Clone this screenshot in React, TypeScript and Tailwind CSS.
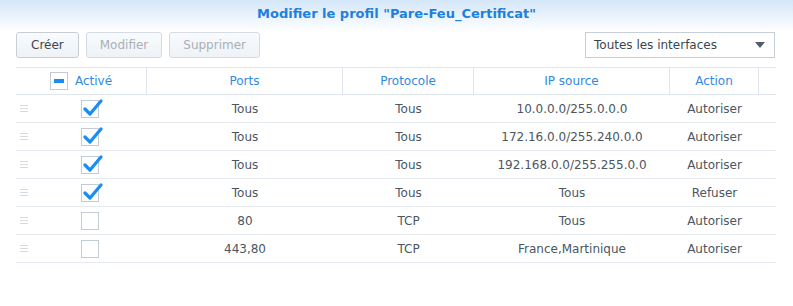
import React from "react";

const rows = [
  { on: true, ports: "Tous", proto: "Tous", ip: "10.0.0.0/255.0.0.0", action: "Autoriser" },
  { on: true, ports: "Tous", proto: "Tous", ip: "172.16.0.0/255.240.0.0", action: "Autoriser" },
  { on: true, ports: "Tous", proto: "Tous", ip: "192.168.0.0/255.255.0.0", action: "Autoriser" },
  { on: true, ports: "Tous", proto: "Tous", ip: "Tous", action: "Refuser" },
  { on: false, ports: "80", proto: "TCP", ip: "Tous", action: "Autoriser" },
  { on: false, ports: "443,80", proto: "TCP", ip: "France,Martinique", action: "Autoriser" },
];

function Check({ on }: { on: boolean }) {
  return (
    <div className="relative w-[18px] h-[18px] border border-[#c3ccd6] bg-white">
      {on && (
        <svg className="absolute left-[1px] top-[-2px]" width="20" height="18" viewBox="0 0 20 18">
          <path d="M2 10 L7 15 L18 2" fill="none" stroke="#1b8cf0" strokeWidth="3.2" strokeLinecap="round" strokeLinejoin="round" />
        </svg>
      )}
    </div>
  );
}

function Handle() {
  return (
    <div className="flex flex-col gap-[2px] w-[8px]">
      <div className="h-px bg-[#d5dbe1]" />
      <div className="h-px bg-[#d5dbe1]" />
      <div className="h-px bg-[#d5dbe1]" />
    </div>
  );
}

export default function App() {
  return (
    <div className="w-[793px] h-[306px] bg-white text-[12px] text-[#4b5661]" style={{ fontFamily: "'DejaVu Sans', Verdana, sans-serif" }}>
      <div className="h-[32px] bg-gradient-to-b from-[#d3e6f8] to-white flex justify-center pt-[5px]">
        <div className="text-[13px] font-bold text-[#1e80de] leading-[18px]">Modifier le profil "Pare-Feu_Certificat"</div>
      </div>
      <div className="flex items-center pl-[16px] pr-[18px] h-[26px] gap-[7px]">
        <button className="h-[26px] px-[14px] rounded-[3px] border border-[#c6cfd8] bg-gradient-to-b from-[#f9fbfd] to-[#eef2f6] text-[#3a4550] text-[12px]">Créer</button>
        <button className="h-[26px] px-[13px] rounded-[3px] border border-[#d4dbe2] bg-gradient-to-b from-[#f9fbfd] to-[#eef2f6] text-[#a8b0b8] text-[12px]">Modifier</button>
        <button className="h-[26px] px-[13px] rounded-[3px] border border-[#d4dbe2] bg-gradient-to-b from-[#f9fbfd] to-[#eef2f6] text-[#a8b0b8] text-[12px]">Supprimer</button>
        <div className="flex-1" />
        <div className="w-[190px] h-[26px] border border-[#c6ced7] bg-white flex items-center justify-between pl-[8px] pr-[9px] text-[#3a4550]">
          <span>Toutes les interfaces</span>
          <svg width="10" height="6" viewBox="0 0 10 6"><path d="M0 0 L10 0 L5 6 Z" fill="#555d66" /></svg>
        </div>
      </div>
      <div className="mx-[16px] mt-[9px] w-[760px]">
        <div className="flex h-[28px] border-t border-b border-[#dfe6ed] text-[#3289e0] items-center">
          <div className="w-[131px] h-full flex items-center justify-center gap-[7px] border-r border-[#dfe6ed]">
            <div className="w-[18px] h-[18px] border border-[#c3ccd6] bg-white flex items-center justify-center">
              <div className="w-[10px] h-[4px] bg-[#1b8cf0]" />
            </div>
            <span>Activé</span>
          </div>
          <div className="w-[196px] h-full flex items-center justify-center border-r border-[#dfe6ed]">Ports</div>
          <div className="w-[131px] h-full flex items-center justify-center border-r border-[#dfe6ed]">Protocole</div>
          <div className="w-[196px] h-full flex items-center justify-center border-r border-[#dfe6ed]">IP source</div>
          <div className="w-[89px] h-full flex items-center justify-center border-r border-[#dfe6ed]">Action</div>
          <div className="flex-1" />
        </div>
        {rows.map((r, i) => (
          <div key={i} className="flex h-[28px] border-b border-[#e3e9ef] items-center">
            <div className="w-[16px] flex justify-start pl-[4px]"><Handle /></div>
            <div className="w-[115px] flex justify-center"><Check on={r.on} /></div>
            <div className="w-[196px] text-center">{r.ports}</div>
            <div className="w-[131px] text-center">{r.proto}</div>
            <div className="w-[196px] text-center">{r.ip}</div>
            <div className="w-[89px] text-center">{r.action}</div>
            <div className="flex-1" />
          </div>
        ))}
      </div>
    </div>
  );
}
